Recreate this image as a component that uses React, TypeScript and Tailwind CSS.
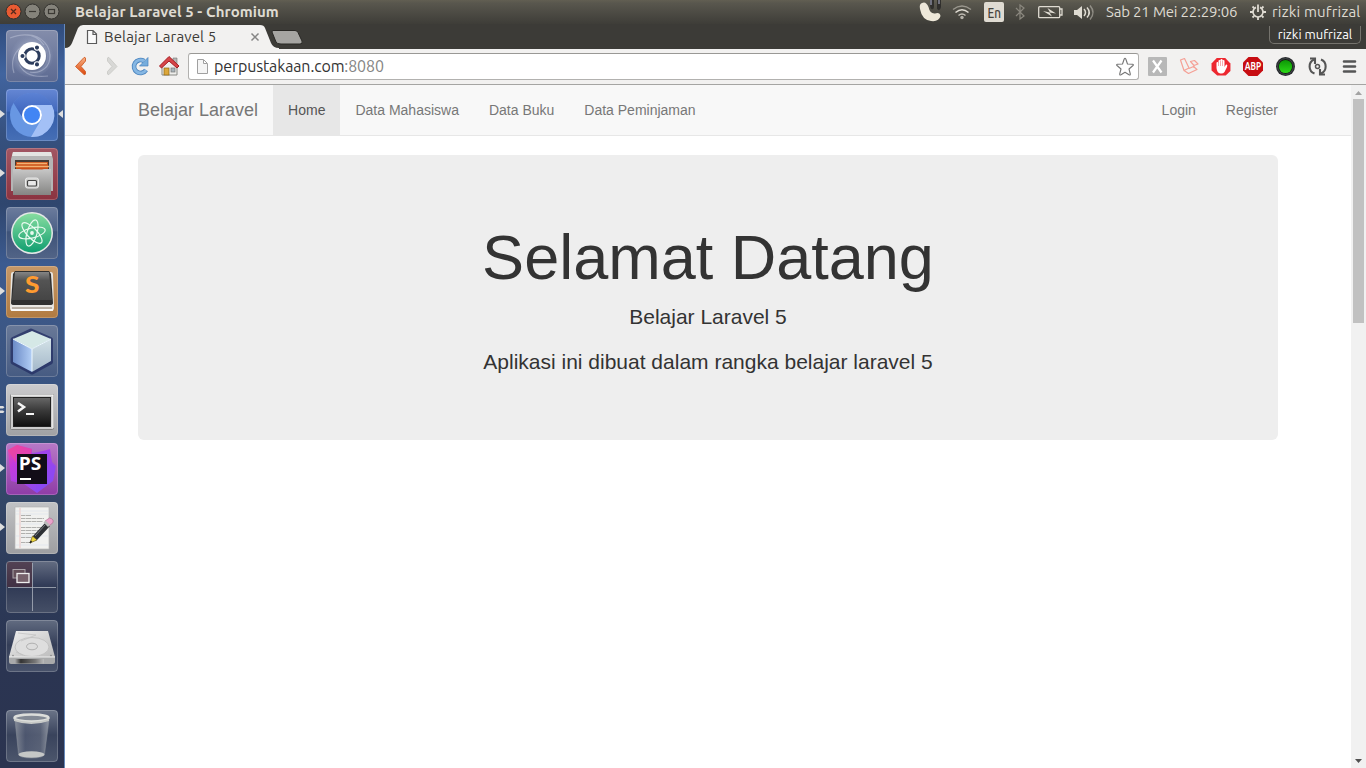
import React from 'react';

const ui = "font-['Ubuntu','Noto_Sans',sans-serif]";

function Tile({ children, bg, marks, active }: { children: React.ReactNode; bg: string; marks?: number; active?: boolean }) {
  return (
    <div className="relative flex h-[52px] w-full shrink-0 pl-[6px]">
      <div className={`h-[52px] w-[52px] overflow-hidden rounded-[4px] ${bg}`}>
        <svg width="52" height="52" viewBox="0 0 52 52">
          {children}
          <rect x=".5" y=".5" width="51" height="51" rx="3.5" fill="none" stroke="#fff" strokeOpacity=".2" />
        </svg>
      </div>
      {marks === 1 && (
        <svg className="absolute left-0 top-[20px]" width="5" height="10"><path d="M0 1L5 5L0 9Z" fill="#dedede" /></svg>
      )}
      {marks === 2 && (
        <svg className="absolute left-0 top-[21px]" width="5" height="9"><path d="M0 1H3L4.500 2.200L3 3.400H0ZM0 5.500H3L4.500 6.700L3 8H0Z" fill="#dedede" /></svg>
      )}
      {active && (
        <svg className="absolute right-[1px] top-[20px]" width="5" height="10"><path d="M5 1L0 5L5 9Z" fill="#dedede" /></svg>
      )}
    </div>
  );
}

function Launcher() {
  return (
    <aside className="flex w-[65px] shrink-0 flex-col gap-[7px] border-r border-[#6689bb] bg-[linear-gradient(180deg,#304c7d_0px,#41649f_50px,#36517f_110px,#2f466e_180px,#3c5b90_240px,#3c5683_320px,#36517f_400px,#344768_470px,#2c3a58_560px,#2b3552_640px,#2b3450_744px)] pt-[6px]">
      <Tile bg="bg-[linear-gradient(180deg,#848dab,#5c6a92)]">
        <defs><radialGradient id="swirl"><stop offset=".3" stopColor="#d8dfed" stopOpacity=".8" /><stop offset="1" stopColor="#8893b4" stopOpacity=".1" /></radialGradient></defs>
        <circle cx="26" cy="26" r="21" fill="url(#swirl)" />
        <g fill="none" stroke="#d4dbea" strokeOpacity=".38" strokeWidth="1.2">
          <path d="M8 43C3 27 12 15 26 13M18 5C35 3 47 17 43 32M4 8C20 2 31 5 38 15M12 27C13 43 25 48 42 46M44 24C45 37 35 44 24 42" />
        </g>
        <circle cx="26" cy="27" r="14.8" fill="#4b5676" opacity=".4" />
        <circle cx="26" cy="26" r="14" fill="#fff" />
        <circle cx="26" cy="26" r="7.2" fill="none" stroke="#2c3c5c" strokeWidth="3" />
        <g fill="#2c3c5c" stroke="#fff" strokeWidth="1.1"><circle cx="16.500" cy="26" r="2.600" /><circle cx="31" cy="17.600" r="2.600" /><circle cx="31" cy="34.400" r="2.600" /></g>
      </Tile>
      <Tile marks={1} active bg="bg-[linear-gradient(180deg,#6587d4_0%,#4269bd_42%,#345da9_45%,#466fb6_100%)]">
        <defs><linearGradient id="chrTop" x2="0" y2="1"><stop stopColor="#5c82d4" /><stop offset="1" stopColor="#3a62bb" /></linearGradient></defs>
        <circle cx="26" cy="26" r="22" fill="#6897e3" />
        <path d="M45.800 16H26L15.500 27L7.500 14A22 22 0 0 1 45.800 16Z" fill="url(#chrTop)" />
        <path d="M45.800 16A22 22 0 0 1 25 48L35.500 30Q38 20 27 16Z" fill="#a3c0f6" />
        <circle cx="26" cy="26" r="10" fill="#fff" /><circle cx="26" cy="26" r="8" fill="#4285f4" />
      </Tile>
      <Tile marks={1} bg="bg-[linear-gradient(180deg,#a25663,#8b3340)]">
        <defs><linearGradient id="cab" x2="0" y2="1"><stop stopColor="#c7c7c7" /><stop offset="1" stopColor="#858583" /></linearGradient></defs>
        <path d="M7 4H45L47 11V43H5V11Z" fill="#b5b5b5" /><path d="M7 4H45L46 8H6Z" fill="#e4e4e2" />
        <path d="M9 12H43V23H9Z" fill="#463b34" /><path d="M10 14H42V22H10Z" fill="#c94f18" /><path d="M11 15.500H41M9 18.500H43" stroke="#f3b271" strokeWidth="1.400" />
        <path d="M7 21H14L16 21.500H36L38 21H45V47H7Z" fill="url(#cab)" />
        <rect x="19.500" y="30" width="13" height="10" rx="2" fill="#cfcfcd" stroke="#e8e8e8" /><rect x="21.500" y="32.500" width="9" height="5.500" rx="1" fill="#e8e8e8" stroke="#444" strokeWidth="1.200" />
      </Tile>
      <Tile bg="bg-[linear-gradient(180deg,#6c7c9d_0%,#4c6187_45%,#3e5379_48%,#526487_100%)]">
        <defs><linearGradient id="atom" x2="0" y2="1"><stop stopColor="#87dda0" /><stop offset="1" stopColor="#109e70" /></linearGradient></defs>
        <circle cx="26" cy="26" r="21" fill="#e5e8e7" /><circle cx="26" cy="26" r="19.500" fill="url(#atom)" />
        <g fill="none" stroke="#e8faef" strokeWidth="1.200"><ellipse cx="26" cy="26" rx="13.500" ry="5" transform="rotate(-14 26 26)" /><ellipse cx="26" cy="26" rx="13.500" ry="5" transform="rotate(46 26 26)" /><ellipse cx="26" cy="26" rx="13.500" ry="5" transform="rotate(106 26 26)" /></g><circle cx="26" cy="26" r="1.900" fill="#e8faef" />
      </Tile>
      <Tile marks={1} bg="bg-[linear-gradient(180deg,#c69868,#b17b41)]">
        <defs><linearGradient id="sub" x2="0" y2="1"><stop stopColor="#858585" /><stop offset=".3" stopColor="#545454" /><stop offset="1" stopColor="#454545" /></linearGradient></defs>
        <path d="M5 8Q5 6 7 6H45Q47 6 47 9L48 42Q48 45 45 45H7Q4 45 4 42Z" fill="#e9e7e3" /><path d="M6 42H46" stroke="#8a7b68" strokeWidth="1" /><path d="M5 44H47" stroke="#fff" strokeWidth="1.600" />
        <path d="M9 5H43L45 8L47 37Q47 39 44 39H8Q5 39 5 37L7 8Z" fill="#303030" /><path d="M9 6H43L46 34H6Z" fill="url(#sub)" />
        <text x="26" y="27.500" textAnchor="middle" fill="#ff9b30" fontFamily="Lato,sans-serif" fontWeight="900" fontSize="23" transform="translate(-3.500 0) scale(1.14 1)">S</text>
      </Tile>
      <Tile bg="bg-[linear-gradient(180deg,#697998,#465b82)]">
        <path d="M25 6L44.500 14.500V37L26 47L7 37V14.500Z" fill="#1d285c" stroke="#232e63" strokeOpacity=".75" strokeWidth="5" strokeLinejoin="round" />
        <defs><linearGradient id="cube"><stop stopColor="#6c8bc7" /><stop offset="1" stopColor="#b2cef5" /></linearGradient><linearGradient id="cubeR" x2="0" y2="1"><stop stopColor="#d2e1e6" /><stop offset="1" stopColor="#a3b7c9" /></linearGradient></defs>
        <path d="M26 6L45 14L26 24L7 14Z" fill="#d5e8e6" /><path d="M7 14L26 24V47L7 37Z" fill="url(#cube)" /><path d="M26 24L45 14V36L26 47Z" fill="url(#cubeR)" /><path d="M7 14L26 24L45 14M26 24V46" fill="none" stroke="#edf8ff" strokeWidth="1" />
      </Tile>
      <Tile marks={2} bg="bg-[linear-gradient(180deg,#cbcbcd,#a0a1a4)]">
        <defs><linearGradient id="term" x2="0" y2="1"><stop stopColor="#666" /><stop offset=".45" stopColor="#393939" /><stop offset="1" stopColor="#111" /></linearGradient></defs>
        <rect x="4.500" y="10.500" width="43" height="35" rx="1" fill="#cdcdcd" stroke="#818181" /><path d="M5 11H47V44" fill="none" stroke="#fff" />
        <rect x="7" y="13" width="38" height="30" fill="#222" /><rect x="8" y="14" width="36" height="28" fill="url(#term)" /><path d="M12 19L18 23L12 27.500" fill="none" stroke="#f5f5f5" strokeWidth="2.500" /><path d="M20 30H28" stroke="#f5f5f5" strokeWidth="2" />
      </Tile>
      <Tile marks={1} bg="bg-[linear-gradient(180deg,#b779c7,#8f3ca6)]">
        <defs><linearGradient id="ps" x2="1" y2="1"><stop stopColor="#f04ba0" /><stop offset=".25" stopColor="#c43bdd" /><stop offset="1" stopColor="#7651f7" /></linearGradient></defs>
        <path d="M2 7L11 2L26 6L26 11L44 6L46 19L50 23L47 38L31 50L18 41L5 38Z" fill="url(#ps)" /><path d="M2 7L11 2L26 6L25 11H10V20Z" fill="#ee449c" opacity=".7" /><path d="M26 10L44 7L42 19L49 24L47 37L31 49Z" fill="#8d46f5" opacity=".5" /><rect x="11" y="11" width="30" height="30" fill="#120d18" />
        <text x="12.700" y="27" fill="#fff" fontFamily="Open Sans,sans-serif" fontWeight="700" fontSize="17.500" textLength="22.500" lengthAdjust="spacingAndGlyphs">PS</text><path d="M14 36H25" stroke="#fff" strokeWidth="2" />
      </Tile>
      <Tile marks={1} bg="bg-[linear-gradient(180deg,#c1c2c4,#9d9ea1)]">
        <path d="M9 5H43V47H9Z" fill="#f1f1ef" stroke="#b5b5b5" strokeWidth=".7" /><path d="M14 6V46" stroke="#e9b0b0" strokeWidth=".7" />
        <g stroke="#b0b0ae" strokeWidth="1"><path d="M15 13.500H25M15 16.500H38M15 19.500H37M15 25.500H37M15 28.500H34M15 31.500H37M15 35.500H29M15 40.500H24" strokeDasharray="4 .5 6 .5" /></g>
        <path d="M9 9H43M9 12H43M9 22H43M9 34H43M9 43H43" stroke="#d7dfeb" strokeWidth=".5" />
        <path d="M25 40L27 34L40 20L44 24L31 38Z" fill="#2d3034" /><path d="M24 41L26.500 34L31 38Z" fill="#eed73d" stroke="#614f13" strokeWidth=".6" /><path d="M39 19L43.500 16Q48 17 47 20.500L43 24Z" fill="#e9a3cb" stroke="#a7527f" strokeWidth=".5" /><path d="M37.500 20.500L42 25L44 23L39.500 18.500Z" fill="#bbb" /><path d="M29 34L39 23" stroke="#777a80" /><path d="M24 41L25.500 39" stroke="#222" strokeWidth="1.500" />
      </Tile>
      <Tile bg="bg-[linear-gradient(180deg,#646d82_0%,#333d59_45%,#303a55_50%,#454f66_100%)]">
        <rect x="1" y="1" width="25" height="25" fill="#4b2c3c" opacity=".65" /><path d="M26.500 2V50M2 26.500H50" stroke="#abb1bc" strokeWidth=".8" />
        <rect x="7" y="8.500" width="12" height="8.500" fill="#64505a" stroke="#aaa3a8" /><rect x="11" y="12.500" width="12" height="9" fill="#76616b" stroke="#eee" strokeWidth="1.300" />
      </Tile>
      <Tile bg="bg-[linear-gradient(180deg,#626c81,#343e58_48%,#49536b)]">
        <defs><linearGradient id="disk" x2="1" y2="1"><stop stopColor="#eee" /><stop offset="1" stopColor="#bcbcbc" /></linearGradient><linearGradient id="edge"><stop stopColor="#aaa" /><stop offset=".2" stopColor="#333" /><stop offset=".7" stopColor="#777" /><stop offset="1" stopColor="#bbb" /></linearGradient></defs>
        <path d="M10 11H42L49 37H3Z" fill="url(#disk)" /><path d="M3 37H49V42Q49 44 47 44H5Q3 44 3 42Z" fill="#a9aaab" /><path d="M9 39H38V43.500H9Z" fill="url(#edge)" />
        <ellipse cx="26" cy="27" rx="17" ry="9.500" fill="#dedede" stroke="#bcbcbc" strokeWidth=".8" /><ellipse cx="26" cy="26.500" rx="5.500" ry="3.300" fill="#ddd" stroke="#a3a3a3" strokeWidth=".8" /><path d="M12 13L30 15L15 21M10 32L17 35" fill="none" stroke="#c3c3c3" strokeWidth=".8" />
        <path d="M3 37H49" stroke="#eee" /><circle cx="7" cy="35.500" r=".7" fill="#777" /><circle cx="45" cy="35.500" r=".7" fill="#777" />
      </Tile>
      <div className="mt-auto pb-[6px]">
        <Tile bg="bg-[linear-gradient(180deg,#6b7488,#39435c_48%,#4c566c)]">
          <defs><linearGradient id="bin"><stop stopColor="#a3a8af" stopOpacity=".65" /><stop offset=".3" stopColor="#59627a" stopOpacity=".6" /><stop offset=".75" stopColor="#687083" stopOpacity=".6" /><stop offset="1" stopColor="#bbbfc4" stopOpacity=".6" /></linearGradient></defs>
          <path d="M9 10H43L38.500 44Q38 48 25.500 48Q13 48 12.500 44Z" fill="url(#bin)" stroke="#8a909b" strokeWidth=".5" />
          <ellipse cx="25.500" cy="44.500" rx="13" ry="3.300" fill="#c5c7c6" /><ellipse cx="25.500" cy="8" rx="17" ry="3.400" fill="#838a95" stroke="#dcdedb" strokeWidth="2.500" /><path d="M8 9V11Q25 17 43 11V9Q25 15 8 9Z" fill="#c7c9c7" />
        </Tile>
      </div>
    </aside>
  );
}

function TopPanel() {
  return (
    <header className={`flex h-6 shrink-0 items-center bg-[linear-gradient(180deg,#625f52_0,#59574e_3px,#3e3d38_24px)] text-[#dfdbd2] ${ui}`}>
      <svg className="shrink-0" width="65" height="24">
        <circle cx="13.500" cy="11.500" r="7.500" fill="#e95b32" stroke="#302f2c" /><path d="M11 9L16 14M16 9L11 14" stroke="#54291c" strokeWidth="1.300" />
        <g fill="#85837b" stroke="#33322e"><circle cx="32.500" cy="11.500" r="7.500" /><circle cx="51.500" cy="11.500" r="7.500" /></g><path d="M29 11.500H36" stroke="#3b3934" strokeWidth="1.200" /><rect x="48.500" y="9.500" width="6" height="4" fill="none" stroke="#3b3934" strokeWidth="1.200" />
      </svg>
      <span className="ml-[10px] w-[206px] whitespace-nowrap text-[15px] font-bold leading-6 tracking-[0.08px]">Belajar Laravel 5 - Chromium</span>
      <svg className="ml-auto shrink-0" width="188" height="24" viewBox="0 0 188 24">
        <path d="M4 3Q1 4 2 9Q4 20 13 21Q21 22 22.500 16Q22 12 17 13.500Q12 14 10.500 7Q8 1 4 3Z" fill="#eee8d9" /><path d="M12 0H16V6Q16 10 13.500 9Q12 8 12 5ZM19 0H23V7Q22 12 19 9Z" fill="#302f2d" /><path d="M13 0V5M21 0V4" stroke="#85889a" strokeWidth="1.500" />
        <g fill="none" stroke="#dfdbd2" strokeWidth="1.500"><path d="M35 9.500Q44 2.500 53 9.500" opacity=".5" /><path d="M37.500 12.500Q44 7 50.500 12.500" /><path d="M40.500 15.500Q44 12.500 47.500 15.500" opacity=".8" /></g><circle cx="44" cy="17.500" r="1.700" fill="#b4b1a8" />
        <rect x="66" y="2" width="20" height="20" rx="2" fill="#dfdbd2" /><text x="69.500" y="17.500" fontSize="14" fontWeight="500" textLength="13.500" lengthAdjust="spacingAndGlyphs" fill="#45433d">En</text>
        <path d="M98 8L106 16L102 19V5L106 8L98 16" fill="none" stroke="#8b887f" strokeWidth="1.200" />
        <rect x="120.700" y="6.700" width="21" height="11" rx="1" fill="none" stroke="#dfdbd2" strokeWidth="1.300" /><path d="M142 9H144V15H142" fill="none" stroke="#dfdbd2" strokeWidth="1.300" /><path d="M125 11L132 12.500L129.500 8L138 13.500L131.500 12.500L134 16.500Z" fill="#dfdbd2" />
        <path d="M156 10H159L164 6V19L159 15H156Z" fill="#dfdbd2" /><g fill="none" stroke="#dfdbd2" strokeWidth="1.500"><path d="M166 9Q169 12.500 166 16" /><path d="M169 7.500Q173.500 12.500 169 17.500" /><path d="M172 5.500Q178 12.500 172 19.500" opacity=".45" /></g>
      </svg>
      <span className="w-[132px] whitespace-nowrap text-[15px] leading-6 tracking-[-0.18px]">Sab 21 Mei 22:29:06</span>
      <svg className="ml-[11px] shrink-0" width="18" height="18" viewBox="0 0 18 18" fill="none" stroke="#dfdbd2"><path d="M7 4.400A5 5 0 1 0 11 4.400" strokeWidth="1.700" /><path d="M9 1.500V9M3.500 3.500L5.200 5.200M14.500 3.500L12.800 5.200M1 9H4M17 9H14M3.500 14.500L5.200 12.800M14.500 14.500L12.800 12.800M9 14V17" strokeWidth="1.800" /></svg>
      <span className="ml-[5px] w-[94px] whitespace-nowrap text-[15px] leading-6 tracking-[0.18px]">rizki mufrizal</span>
    </header>
  );
}

function Tabs() {
  return (
    <div className={`relative flex h-[25px] shrink-0 bg-[#3c3b37] ${ui}`}>
      <svg className="absolute left-0 top-0" width="245" height="25">
        <path d="M0 25V24Q5 24 7 19L13 4Q15 1 18 1H195Q199 1 200 4L206 19Q208 24 214 24V25Z" fill="#f2f1f0" />
        <path d="M207.500 6.500H230Q232 6.500 233 8.500L237 17Q238 20 235 20H216Q212 20 211 18L207 8Z" fill="#a6a5a2" stroke="#292825" />
        <path d="M22.500 6.500H28L31.500 10V19.500H22.500ZM28 7V10.500H31" fill="#fafafa" stroke="#5a5a5a" strokeWidth="1.200" /><path d="M186.500 9.500L193.500 16.500M193.500 9.500L186.500 16.500" stroke="#858585" strokeWidth="1.500" />
      </svg>
      <span className="relative ml-[39px] whitespace-nowrap text-[15px] leading-[25px] tracking-[0.13px] text-[#3c3b37]">Belajar Laravel 5</span>
      <div className="ml-auto mr-[5px] mt-[2px] flex h-[18px] w-[92px] items-center justify-center whitespace-nowrap rounded-b-[5px] border border-t-0 border-[#75736d] text-[13px] leading-[17px] text-white">rizki mufrizal</div>
    </div>
  );
}

function Toolbar() {
  return (
    <div className="flex h-9 shrink-0 items-center border-b border-[#a5a5a3] bg-[#f2f1f0]">
      <svg className="shrink-0" width="123" height="35" viewBox="0 0 123 35">
        <defs><linearGradient id="back" x2="0" y2="1"><stop stopColor="#f8b184" /><stop offset="1" stopColor="#dc470c" /></linearGradient></defs>
        <path d="M19 8.500Q20 8 20.500 9V12L16 17.500L20.500 22.500V25Q20 26 19 25.500L10.500 17.500Z" fill="url(#back)" stroke="#cf5b25" strokeWidth=".9" strokeLinejoin="round" />
        <path d="M44 8.500Q43 8 42.500 9V12L47 17.500L42.500 22.500V25Q43 26 44 25.500L52 17.500Z" fill="#d8d8d6" stroke="#c6c6c3" strokeWidth=".8" strokeLinejoin="round" />
        <path d="M81 21A6.500 6.500 0 1 1 79 12" fill="none" stroke="#4882bd" strokeWidth="4.600" /><path d="M83 8.500V17H74.500Z" fill="#76addd" stroke="#4882bd" strokeWidth=".7" /><path d="M81 21A6.500 6.500 0 1 1 79 12" fill="none" stroke="#86b7e3" strokeWidth="3" />
        <path d="M97 17L104 11L112 17V26H97Z" fill="#eeeeec" stroke="#888a85" /><rect x="99" y="19" width="5" height="7" fill="#dca73a" stroke="#8f6816" strokeWidth=".7" /><rect x="106" y="19" width="4" height="4" fill="#a8b4bb" stroke="#777" strokeWidth=".7" /><path d="M108 9H112V15L108 12Z" fill="#b7b7b5" stroke="#777" strokeWidth=".6" /><path d="M94.500 17L104 7.500L114 17L112 19L104 12L96.500 19Z" fill="#d74548" stroke="#a51c22" />
      </svg>
      <div className={`flex h-[27px] w-[951px] shrink-0 items-center rounded-[3px] border border-[#b2b1af] border-t-[#999895] bg-white pl-[7px] text-[16px] tracking-[-0.12px] text-[#333] ${ui}`}>
        <svg className="mr-[5px] shrink-0" width="13" height="17"><path d="M1.500 1.500H7.500L11.500 5.500V15.500H1.500ZM7.500 2V5.500H11" fill="#f5f5f5" stroke="#a0a0a0" /></svg>
        <span className="whitespace-nowrap leading-[25px]">perpustakaan.com<span className="text-[#848484]">:8080</span></span>
        <svg className="ml-auto mr-[3px]" width="20" height="20" viewBox="0 0 20 20"><path d="M9.200 2Q10 .8 10.800 2L12.500 7L17.500 7.300Q19 7.500 18 8.500L14 12L15.300 17Q15.400 18.500 14 17.800L10 15.200L6 17.800Q4.600 18.500 4.700 17L6 12L2 8.500Q1 7.500 2.500 7.300L7.500 7Z" fill="#fff" stroke="#777" strokeWidth="1.100" strokeLinejoin="round" /></svg>
      </div>
      <svg className={`shrink-0 ${ui}`} width="227" height="35" viewBox="0 0 227 35">
        <rect x="9" y="8" width="19" height="19" rx="1" fill="#b8b8b8" /><path d="M14 11.500L22.500 23.500M22.500 11.500L14 23.500" stroke="#fff" strokeWidth="2.200" />
        <g fill="none" stroke="#f5a096" strokeWidth="1.200" strokeLinejoin="round"><path d="M41.500 11L45.500 9.500L50 19L45 21.500ZM45 21.500L49.500 24.500L58 20.500L54.500 17.500L50 19.500M51.500 12.500L55.500 11.500L59 15L55 16.500ZM55 16.500V19" /></g>
        <path d="M77.500 9H86.500L92 14.500V22L87 26.500H78L72 21.500V14.500Z" transform="translate(4.500 0) scale(.945 1)" fill="#ed2830" /><path d="M77.500 19V14Q77.500 13 78.500 13T79.500 14V17V12Q79.500 11 80.500 11T81.500 12V16V11Q81.500 10 82.500 10T83.500 11V16V12Q83.500 11 84.500 11T85.500 12V18L87 15.500Q89 15 88 18L85.500 23Q84 25 81.500 24.500Q78 24 77.500 19Z" fill="#fff" /><path d="M79.500 13V17M81.500 12V17M83.500 12V17" stroke="#ed5a60" strokeWidth=".5" />
        <path d="M109.500 8H118.500L124 13.500V21.500L118.500 27H109.500L104 21.500V13.500Z" fill="#c70d12" /><text x="105.700" y="21.200" fill="#fff" fontWeight="700" fontSize="10.500" textLength="16.500" lengthAdjust="spacingAndGlyphs">ABP</text>
        <defs><linearGradient id="green" x2="0" y2="1"><stop stopColor="#0c9606" /><stop offset="1" stopColor="#2cda17" /></linearGradient></defs><circle cx="146.500" cy="17.500" r="9.500" fill="#282b2e" /><circle cx="146.500" cy="17.500" r="7.800" fill="#101410" stroke="#545b60" strokeWidth=".7" /><circle cx="146.500" cy="17.500" r="6.600" fill="url(#green)" />
        <g fill="none" stroke="#555" strokeWidth="2.100"><path d="M175 10.500A7.600 7.600 0 0 0 175.500 24.500M182 10.500A7.600 7.600 0 0 1 182 24.500" /><path d="M171 9.500H176V15M186 25.500H181V20" /><circle cx="178.500" cy="17.500" r="2" strokeWidth="1.500" /></g>
        <path d="M205 12.500H216M205 17.500H216M205 22.500H216" stroke="#555" strokeWidth="2.600" strokeLinecap="round" />
      </svg>
    </div>
  );
}

function Website() {
  return (
    <div className="flex min-h-0 flex-1 bg-white font-['Liberation_Sans',Arial,sans-serif]">
      <div className="min-w-0 flex-1">
        <nav className="flex h-[51px] items-stretch border-b border-[#e7e7e7] bg-[#f8f8f8] pl-[73px] pr-[58px] text-[14px] leading-5 text-[#777]">
          <a className="py-[15px] pr-[15px] text-[18px]">Belajar Laravel</a>
          <a className="bg-[#e7e7e7] p-[15px] text-[#555]">Home</a>
          <a className="p-[15px]">Data Mahasiswa</a><a className="p-[15px]">Data Buku</a><a className="p-[15px]">Data Peminjaman</a>
          <a className="ml-auto p-[15px]">Login</a><a className="p-[15px]">Register</a>
        </nav>
        <main className="px-[73px] pt-[19px]">
          <section className="h-[285px] w-[1140px] rounded-[6px] bg-[#eee] pt-[68px] text-center text-[#333]">
            <h1 className="mb-[10px] text-[63px] font-normal leading-[69px]">Selamat Datang</h1>
            <p className="mb-[15px] text-[21px] leading-[30px]">Belajar Laravel 5</p>
            <p className="text-[21px] leading-[30px]">Aplikasi ini dibuat dalam rangka belajar laravel 5</p>
          </section>
        </main>
      </div>
      <div className="flex w-[15px] shrink-0 flex-col items-center bg-[#f1f1f1]">
        <svg width="15" height="14"><path d="M7.500 6L11 10H4Z" fill="#a3a3a3" /></svg>
        <div className="h-[224px] w-[11px] bg-[#c1c1c1]" />
        <svg className="mt-auto" width="15" height="14"><path d="M4 5H11L7.500 9Z" fill="#505050" /></svg>
      </div>
    </div>
  );
}

export default function App() {
  return (
    <div className="flex h-screen w-full flex-col overflow-hidden">
      <TopPanel />
      <div className="flex min-h-0 flex-1">
        <Launcher />
        <div className="flex min-w-0 flex-1 flex-col"><Tabs /><Toolbar /><Website /></div>
      </div>
    </div>
  );
}
